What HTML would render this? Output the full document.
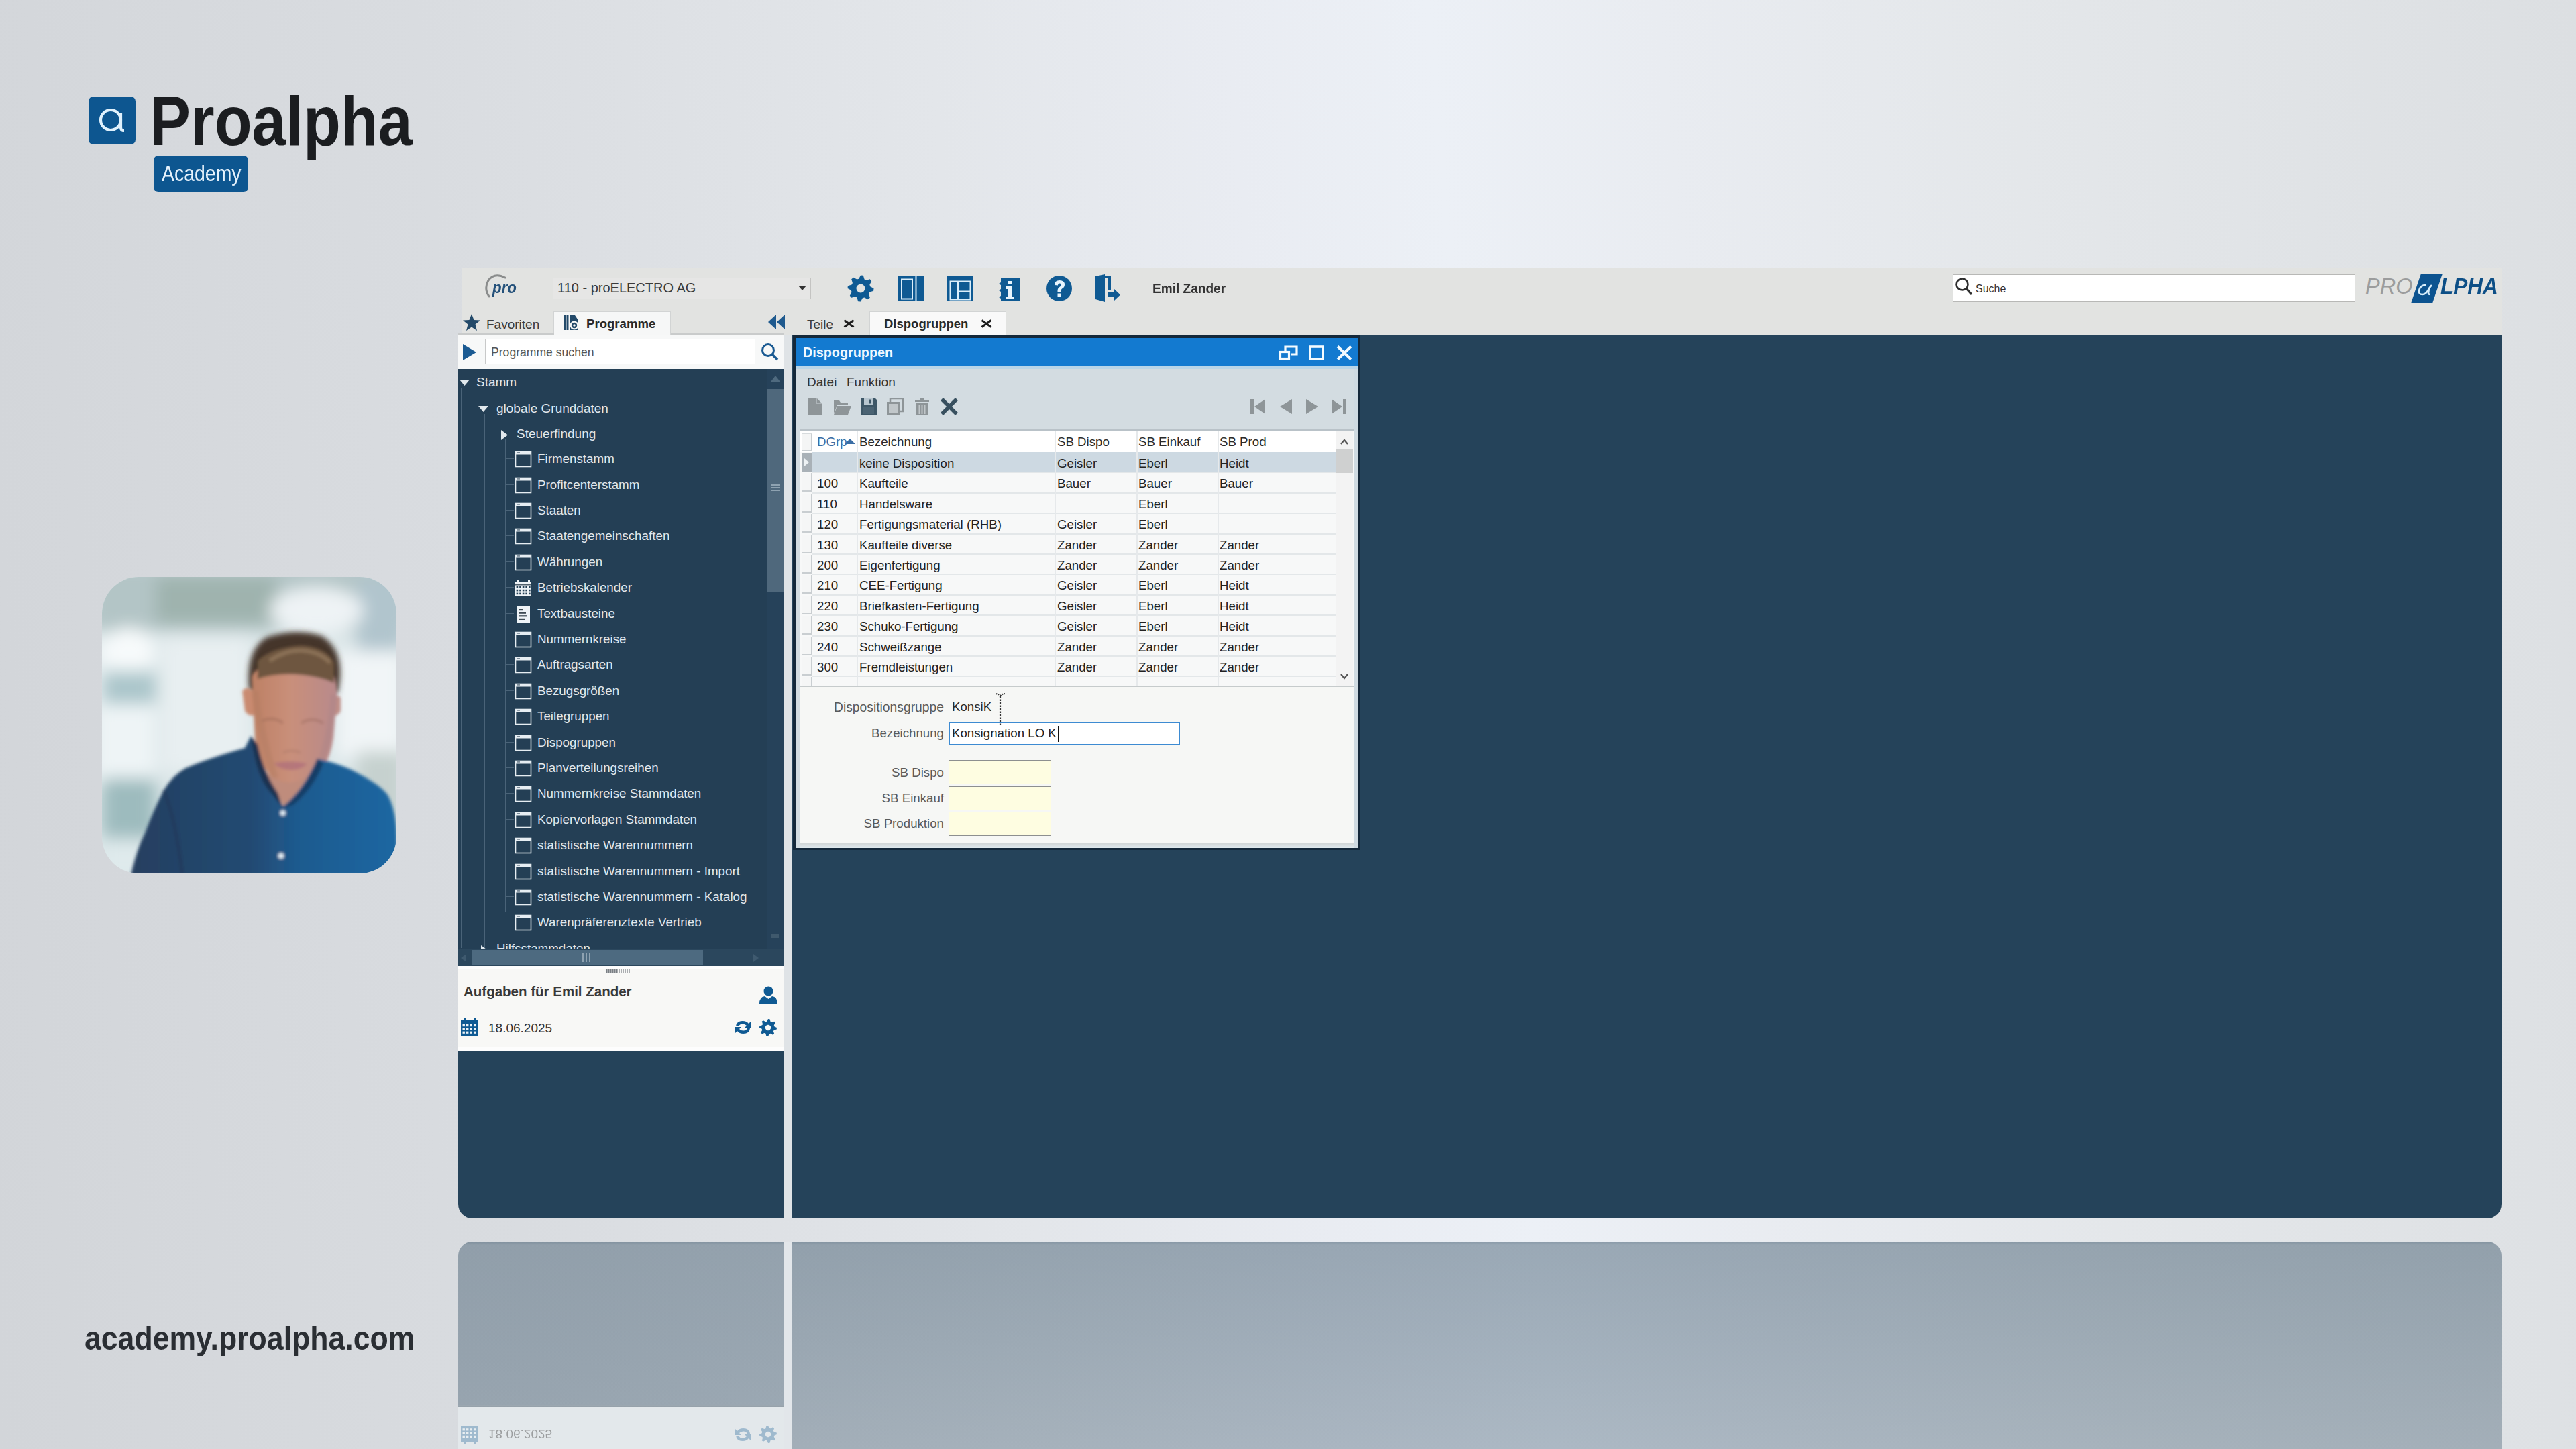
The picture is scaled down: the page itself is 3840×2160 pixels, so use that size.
<!DOCTYPE html>
<html><head><meta charset="utf-8">
<style>
*{margin:0;padding:0;box-sizing:border-box}
html,body{width:3840px;height:2160px;overflow:hidden}
body{position:relative;font-family:"Liberation Sans",sans-serif;
background:linear-gradient(85deg,#d2d5d9 0%,#d9dce0 20%,#e3e6ea 39%,#e9ecf2 50%,#ecf0f6 57.5%,#e9ecf1 66%,#e4e7ea 79%,#dcdfe2 100%);}
.a{position:absolute;display:block}
.t{position:absolute;white-space:nowrap;line-height:1}
</style></head><body>
<div class="a" style="left:132px;top:144px;width:70px;height:71px;background:#0d5690;border-radius:7px"></div>
<svg class="a" style="left:132px;top:144px;" width="70" height="71" viewBox="0 0 70 71"><circle cx="33" cy="35" r="15" fill="none" stroke="#dff1fd" stroke-width="4.2"/><path d="M48 24 L48 46 Q48 51 53 51" fill="none" stroke="#dff1fd" stroke-width="4.2"/></svg>
<div class="t" style="left:223px;top:128px;font-size:104px;color:#1b1d20;font-weight:bold;transform:scaleX(0.88);transform-origin:0 0;">Proalpha</div>
<div class="a" style="left:229px;top:232px;width:141px;height:54px;background:#0d5690;border-radius:7px"></div>
<div class="t" style="left:241px;top:243px;font-size:32.7px;color:#e6f2fc;transform:scaleX(0.87);transform-origin:0 0;">Academy</div>
<div class="t" style="left:126px;top:1970px;font-size:50px;color:#2a2e33;font-weight:bold;transform:scaleX(0.892);transform-origin:0 0;">academy.proalpha.com</div>
<svg class="a" style="left:152px;top:860px;" width="439" height="442" viewBox="0 0 439 442">
<defs>
<filter id="bl1" x="-50%" y="-50%" width="200%" height="200%"><feGaussianBlur stdDeviation="12"/></filter>
<filter id="bl2" x="-20%" y="-20%" width="140%" height="140%"><feGaussianBlur stdDeviation="2"/></filter>
<filter id="bl3" x="-20%" y="-20%" width="140%" height="140%"><feGaussianBlur stdDeviation="4"/></filter>
<linearGradient id="shirt" x1="0" y1="0" x2="1" y2="0"><stop offset="0" stop-color="#253f60"/><stop offset="0.45" stop-color="#244a72"/><stop offset="0.62" stop-color="#1e5a8e"/><stop offset="1" stop-color="#1f67a2"/></linearGradient>
<linearGradient id="face" x1="0" y1="0" x2="1" y2="0"><stop offset="0" stop-color="#bd8064"/><stop offset="0.45" stop-color="#c98f7a"/><stop offset="1" stop-color="#b88a8c"/></linearGradient>
<clipPath id="pc"><rect x="0" y="0" width="439" height="442" rx="55"/></clipPath>
</defs>
<g clip-path="url(#pc)">
<rect width="439" height="442" fill="#dbe6e8"/>
<g filter="url(#bl1)">
<rect x="-20" y="-20" width="480" height="100" fill="#b3c5c6"/>
<rect x="80" y="0" width="180" height="70" fill="#9fb3ae"/>
<rect x="380" y="0" width="70" height="120" fill="#b1c5cd"/>
<ellipse cx="320" cy="50" rx="70" ry="35" fill="#eef3f5"/>
<rect x="-10" y="90" width="90" height="220" fill="#eef4f6"/>
<ellipse cx="40" cy="110" rx="35" ry="35" fill="#f7fafb"/>
<rect x="0" y="140" width="80" height="50" fill="#abc6cb"/>
<rect x="0" y="300" width="80" height="90" fill="#9dbbbe"/>
<rect x="0" y="390" width="70" height="60" fill="#dfeaec"/>
<rect x="90" y="90" width="130" height="200" fill="#e8eff1"/>
<rect x="350" y="110" width="100" height="160" fill="#f1f5f7"/>
<rect x="380" y="260" width="70" height="130" fill="#c6d1cf"/>
</g>
<g filter="url(#bl3)">
<path d="M219 165 Q214 110 245 90 Q290 75 328 88 Q358 108 355 150 L352 172 L222 172 Z" fill="#44342a"/>
</g>
<g filter="url(#bl2)">
<path d="M209 170 Q218 160 226 172 L228 205 Q220 210 213 200 Z" fill="#c98a70"/>
<path d="M356 180 Q348 172 342 182 L342 206 Q350 210 356 200 Z" fill="#bf8f88"/>
<path d="M223 150 Q225 135 255 132 Q300 128 340 138 Q352 150 350 180 L345 240 Q338 290 305 306 Q282 312 258 304 Q235 285 228 240 Z" fill="url(#face)"/>
<path d="M232 152 Q260 142 300 146 Q330 150 346 158 L346 128 Q335 105 298 102 Q255 104 232 125 Z" fill="#6e5640"/>
<path d="M250 125 Q275 108 300 110 Q325 112 340 128" stroke="#a88c6c" stroke-width="6" fill="none" opacity="0.5"/>
<path d="M238 215 Q255 207 270 218" stroke="#8a5a4e" stroke-width="3" fill="none" opacity="0.45"/>
<path d="M297 218 Q313 208 330 218" stroke="#8a5a4e" stroke-width="3" fill="none" opacity="0.45"/>
<path d="M270 262 Q282 256 296 262" stroke="#a87566" stroke-width="3" fill="none" opacity="0.5"/><path d="M228 170 Q238 240 258 300" stroke="#b07a62" stroke-width="10" fill="none" opacity="0.35"/><path d="M346 175 Q340 250 318 295" stroke="#a98388" stroke-width="10" fill="none" opacity="0.35"/>
<path d="M256 278 Q282 272 306 279 Q296 288 281 288 Q265 287 256 278 Z" fill="#b0707a" opacity="0.8"/>
<path d="M243 302 Q262 322 272 345 L300 330 Q318 300 320 286 Q300 305 280 306 Q258 305 243 290 Z" fill="#bf8c7c"/>
<path d="M43 445 Q52 405 64 382 Q78 345 92 318 Q105 296 125 285 Q160 270 213 255 L222 237 Q232 290 255 318 L270 342 Q300 318 321 271 Q360 280 382 293 Q415 310 426 325 Q440 350 440 400 L440 445 Z" fill="url(#shirt)"/>
<path d="M222 237 Q230 300 252 322 L270 345 L262 322 Q240 290 232 250 Z" fill="#1a3050"/>
<path d="M321 271 Q305 315 270 345 L285 340 Q315 315 330 278 Z" fill="#173d66"/>
<path d="M92 318 Q110 360 120 445" stroke="#1f3656" stroke-width="5" fill="none" opacity="0.6"/>
<circle cx="269.7" cy="352" r="4" fill="#e3eef6"/>
<circle cx="267" cy="415.7" r="4.3" fill="#e8f2f8"/>
</g>
</g>
</svg>
<div class="a" style="left:688px;top:400px;width:3041px;height:99px;background:#e2e3e1;"></div>
<div class="a" style="left:683px;top:499px;width:486px;height:51px;background:#f7f8f8;"></div>
<div class="a" style="left:683px;top:550px;width:486px;height:890px;background:#243f55;"></div>
<div class="a" style="left:683px;top:1440px;width:486px;height:126px;background:#f8f8f6;border-top:5px solid #fdfdfd;border-bottom:5px solid #fdfdfd"></div>
<div class="a" style="left:683px;top:1566px;width:486px;height:250px;background:#25435a;border-bottom-left-radius:21px"></div>
<div class="a" style="left:1169px;top:499px;width:12px;height:1317px;background:#dfe3e6;"></div>
<div class="a" style="left:1181px;top:499px;width:2548px;height:1317px;background:#25435a;border-bottom-right-radius:21px"></div>
<svg class="a" style="left:720px;top:405px;" width="56" height="40" viewBox="0 0 56 40"><path d="M33 9 Q17 1 8 13 Q1 25 9 37" fill="none" stroke="#8a8c8c" stroke-width="3" stroke-linecap="round"/></svg>
<div class="t" style="left:734px;top:418px;font-size:23px;color:#24517a;font-weight:bold;font-style:italic;transform:scaleX(0.97);transform-origin:0 0;">pro</div>
<div class="a" style="left:824px;top:414px;width:385px;height:32px;background:#e6e6e5;border:1.5px solid #c4c4c2"></div>
<div class="t" style="left:831px;top:419px;font-size:20px;color:#3a3a3a;">110 - proELECTRO AG</div>
<svg class="a" style="left:1190px;top:426px;" width="12" height="8" viewBox="0 0 12 8"><path d="M0 0 L12 0 L6 7 Z" fill="#333"/></svg>
<svg class="a" style="left:1262px;top:409px;" width="42" height="42" viewBox="0 0 42 42"><path d="M18.17,6.78 L21.00,1.50 L24.80,1.87 L26.55,7.60 L29.06,8.94 L34.79,7.21 L37.21,10.17 L34.40,15.45 L35.22,18.17 L40.50,21.00 L40.13,24.80 L34.40,26.55 L33.06,29.06 L34.79,34.79 L31.83,37.21 L26.55,34.40 L23.83,35.22 L21.00,40.50 L17.20,40.13 L15.45,34.40 L12.94,33.06 L7.21,34.79 L4.79,31.83 L7.60,26.55 L6.78,23.83 L1.50,21.00 L1.87,17.20 L7.60,15.45 L8.94,12.94 L7.21,7.21 L10.17,4.79 L15.45,7.60 Z M27.5,21 A6.5 6.5 0 1 0 14.5,21 A6.5 6.5 0 1 0 27.5,21 Z" fill="#0f5a93" fill-rule="evenodd"/></svg>
<svg class="a" style="left:1338px;top:411px;" width="39" height="38" viewBox="0 0 39 38"><rect x="0" y="0" width="39" height="38" fill="#0f5a93"/><rect x="6" y="5.5" width="16" height="29" fill="none" stroke="#dbeefa" stroke-width="2"/><rect x="26.5" y="0" width="2" height="38" fill="#dbeefa"/></svg>
<svg class="a" style="left:1412px;top:411px;" width="39" height="38" viewBox="0 0 39 38"><rect x="0" y="0" width="39" height="38" fill="#0f5a93"/><rect x="4.5" y="8.5" width="30" height="27" fill="none" stroke="#dbeefa" stroke-width="2"/><rect x="15" y="8" width="2" height="28" fill="#dbeefa"/><rect x="16" y="22.5" width="19" height="2" fill="#dbeefa"/></svg>
<svg class="a" style="left:1489px;top:414px;" width="32" height="35" viewBox="0 0 32 35"><path d="M3 0 H32 V35 H3 V31 L0 29 L3 27 V21 L0 19 L3 17 V11 L0 9 L3 7 Z" fill="#0f5a93"/><rect x="14" y="5" width="6" height="5" fill="#e8f4fc"/><path d="M11 13 H20 V28 H23 V32 H11 V28 H14 V17 H11 Z" fill="#e8f4fc"/></svg>
<svg class="a" style="left:1559px;top:410px;" width="40" height="40" viewBox="0 0 40 40"><circle cx="20" cy="20" r="19" fill="#0f5a93"/><path d="M13 15 Q13 8 20.5 8 Q28 8 28 14.5 Q28 18.5 24 20.5 Q22.5 21.5 22.5 24 V25.5 H17.5 V23.5 Q17.5 19.5 21 17.5 Q23 16.3 23 14.8 Q23 12.5 20.5 12.5 Q18 12.5 18 15.5 Z" fill="#e8f4fc"/><rect x="17.5" y="27.5" width="5" height="5" fill="#e8f4fc"/></svg>
<svg class="a" style="left:1632px;top:409px;" width="40" height="41" viewBox="0 0 40 41"><path d="M1 3 L15 0 V41 L1 37 Z" fill="#0f5a93"/><path d="M15 2 H24 V23 H19 V6 H15 Z" fill="#0f5a93"/><path d="M19 27 H29 V22 L38 30.5 L29 39 V34 H19 Z" fill="#0f5a93"/></svg>
<div class="t" style="left:1718px;top:420px;font-size:20.5px;color:#333333;font-weight:bold;transform:scaleX(0.93);transform-origin:0 0;">Emil Zander</div>
<div class="a" style="left:2911px;top:409px;width:600px;height:41px;background:#ffffff;border:1.5px solid #b8b8b6"></div>
<svg class="a" style="left:2914px;top:413px;" width="28" height="30" viewBox="0 0 28 30"><circle cx="11" cy="11" r="8.5" fill="none" stroke="#2d2d2d" stroke-width="2.6"/><path d="M17 17 L25 26" stroke="#2d2d2d" stroke-width="3.2"/></svg>
<div class="t" style="left:2945px;top:423px;font-size:16px;color:#333;">Suche</div>
<div class="t" style="left:3526px;top:411px;font-size:32.5px;color:#9b9c9c;font-style:italic;">PRO</div>
<svg class="a" style="left:3594px;top:408px;" width="48" height="44" viewBox="0 0 48 44"><path d="M15 0 H47 L32 44 H0 Z" fill="#0c5390"/><path d="M22 17 Q14 17 12 25 Q11 31 17 31 Q23 31 27 22 L31 17 M27 22 L26 29 Q26 31 29 31" fill="none" stroke="#d8eefc" stroke-width="2.6"/></svg>
<div class="t" style="left:3638px;top:411px;font-size:32.5px;color:#0d4f86;font-weight:bold;font-style:italic;transform:scaleX(0.97);transform-origin:0 0;">LPHA</div>
<svg class="a" style="left:690px;top:468px;" width="26" height="26" viewBox="0 0 26 26"><path d="M13 0 L16.5 9 L26 9.5 L18.5 15.5 L21 25 L13 19.5 L5 25 L7.5 15.5 L0 9.5 L9.5 9 Z" fill="#234a6a"/></svg>
<div class="t" style="left:725px;top:474px;font-size:19px;color:#3c3c3c;">Favoriten</div>
<div class="a" style="left:825px;top:464px;width:175px;height:36px;background:#f6f7f7;border:1px solid #d2d4d4;border-bottom:none"></div>
<svg class="a" style="left:839px;top:468px;" width="26" height="26" viewBox="0 0 26 26"><rect x="1" y="2" width="3" height="22" fill="#234a6a"/><rect x="5.5" y="2" width="3" height="22" fill="#234a6a"/><path d="M10 2 H18 L22 8 V24 H10 Z" fill="#234a6a"/><circle cx="17" cy="17" r="6.5" fill="#f6f7f7"/><circle cx="17" cy="17" r="4.2" fill="#234a6a"/><circle cx="17" cy="17" r="1.8" fill="#f6f7f7"/></svg>
<div class="t" style="left:874px;top:474px;font-size:18.6px;color:#2a2a2a;font-weight:bold;">Programme</div>
<svg class="a" style="left:1145px;top:469px;" width="26" height="22" viewBox="0 0 26 22"><path d="M12 0 L0 11 L12 22 Z M25 0 L13 11 L25 22 Z" fill="#1f5a8e"/></svg>
<div class="t" style="left:1203px;top:474px;font-size:19px;color:#3c3c3c;">Teile</div>
<svg class="a" style="left:1257px;top:476px;" width="17" height="13" viewBox="0 0 17 13"><path d="M1.5 1.5 L15.5 11.5 M15.5 1.5 L1.5 11.5" stroke="#1d1d1d" stroke-width="3"/></svg>
<div class="a" style="left:1296px;top:464px;width:204px;height:36px;background:#f9f9f9;border:1px solid #d2d4d4;border-bottom:none"></div>
<div class="t" style="left:1318px;top:474px;font-size:18.5px;color:#2a2a2a;font-weight:bold;">Dispogruppen</div>
<svg class="a" style="left:1462px;top:476px;" width="17" height="13" viewBox="0 0 17 13"><path d="M1.5 1.5 L15.5 11.5 M15.5 1.5 L1.5 11.5" stroke="#1d1d1d" stroke-width="3"/></svg>
<div class="a" style="left:683px;top:497px;width:143px;height:2px;background:#c9cbcb;"></div>
<div class="a" style="left:1000px;top:497px;width:169px;height:2px;background:#c9cbcb;"></div>
<svg class="a" style="left:689px;top:513px;" width="22" height="24" viewBox="0 0 22 24"><path d="M1 0 L21 12 L1 24 Z" fill="#1a5a92"/></svg>
<div class="a" style="left:723px;top:505px;width:403px;height:38px;background:#ffffff;border:1.5px solid #c8c9c9"></div>
<div class="t" style="left:732px;top:517px;font-size:17.6px;color:#555;">Programme suchen</div>
<svg class="a" style="left:1134px;top:511px;" width="28" height="28" viewBox="0 0 28 28"><circle cx="11" cy="11" r="8.5" fill="none" stroke="#1a5a92" stroke-width="3"/><path d="M17 17 L25 25" stroke="#1a5a92" stroke-width="3.5"/></svg>
<div class="a" style="left:687px;top:578px;width:1px;height:835px;background:#4a6378;"></div>
<div class="a" style="left:722px;top:617px;width:1px;height:796px;background:#4a6378;"></div>
<div class="a" style="left:753px;top:655px;width:1px;height:705px;background:#4a6378;"></div>
<div class="a" style="left:754px;top:683px;width:12px;height:1px;background:#4a6378;"></div>
<div class="a" style="left:754px;top:722px;width:12px;height:1px;background:#4a6378;"></div>
<div class="a" style="left:754px;top:760px;width:12px;height:1px;background:#4a6378;"></div>
<div class="a" style="left:754px;top:798px;width:12px;height:1px;background:#4a6378;"></div>
<div class="a" style="left:754px;top:837px;width:12px;height:1px;background:#4a6378;"></div>
<div class="a" style="left:754px;top:875px;width:12px;height:1px;background:#4a6378;"></div>
<div class="a" style="left:754px;top:914px;width:12px;height:1px;background:#4a6378;"></div>
<div class="a" style="left:754px;top:952px;width:12px;height:1px;background:#4a6378;"></div>
<div class="a" style="left:754px;top:990px;width:12px;height:1px;background:#4a6378;"></div>
<div class="a" style="left:754px;top:1029px;width:12px;height:1px;background:#4a6378;"></div>
<div class="a" style="left:754px;top:1067px;width:12px;height:1px;background:#4a6378;"></div>
<div class="a" style="left:754px;top:1106px;width:12px;height:1px;background:#4a6378;"></div>
<div class="a" style="left:754px;top:1144px;width:12px;height:1px;background:#4a6378;"></div>
<div class="a" style="left:754px;top:1182px;width:12px;height:1px;background:#4a6378;"></div>
<div class="a" style="left:754px;top:1221px;width:12px;height:1px;background:#4a6378;"></div>
<div class="a" style="left:754px;top:1259px;width:12px;height:1px;background:#4a6378;"></div>
<div class="a" style="left:754px;top:1298px;width:12px;height:1px;background:#4a6378;"></div>
<div class="a" style="left:754px;top:1336px;width:12px;height:1px;background:#4a6378;"></div>
<div class="a" style="left:754px;top:1374px;width:12px;height:1px;background:#4a6378;"></div>
<svg class="a" style="left:685px;top:566px;" width="16" height="10" viewBox="0 0 16 10"><path d="M0 0 H15 L7.5 9 Z" fill="#e1e8ed"/></svg>
<div class="t" style="left:710px;top:560px;font-size:19px;color:#e1e8ed;">Stamm</div>
<svg class="a" style="left:713px;top:605px;" width="16" height="10" viewBox="0 0 16 10"><path d="M0 0 H15 L7.5 9 Z" fill="#e1e8ed"/></svg>
<div class="t" style="left:740px;top:599px;font-size:19px;color:#e1e8ed;">globale Grunddaten</div>
<svg class="a" style="left:747px;top:641px;" width="11" height="16" viewBox="0 0 11 16"><path d="M0 0 L10 7.5 L0 15 Z" fill="#e1e8ed"/></svg>
<div class="t" style="left:770px;top:637px;font-size:19px;color:#e1e8ed;">Steuerfindung</div>
<svg class="a" style="left:767px;top:672px;" width="26" height="26" viewBox="0 0 26 26"><rect x="1.5" y="1.5" width="23" height="22" fill="none" stroke="#e6edf2" stroke-width="1.6"/><rect x="1" y="1" width="24" height="4.5" fill="#e6edf2"/><rect x="3" y="2" width="5" height="1.8" fill="#7d8d9a"/></svg>
<div class="t" style="left:801px;top:675px;font-size:18.8px;color:#e1e8ed;">Firmenstamm</div>
<svg class="a" style="left:767px;top:711px;" width="26" height="26" viewBox="0 0 26 26"><rect x="1.5" y="1.5" width="23" height="22" fill="none" stroke="#e6edf2" stroke-width="1.6"/><rect x="1" y="1" width="24" height="4.5" fill="#e6edf2"/><rect x="3" y="2" width="5" height="1.8" fill="#7d8d9a"/></svg>
<div class="t" style="left:801px;top:714px;font-size:18.8px;color:#e1e8ed;">Profitcenterstamm</div>
<svg class="a" style="left:767px;top:749px;" width="26" height="26" viewBox="0 0 26 26"><rect x="1.5" y="1.5" width="23" height="22" fill="none" stroke="#e6edf2" stroke-width="1.6"/><rect x="1" y="1" width="24" height="4.5" fill="#e6edf2"/><rect x="3" y="2" width="5" height="1.8" fill="#7d8d9a"/></svg>
<div class="t" style="left:801px;top:752px;font-size:18.8px;color:#e1e8ed;">Staaten</div>
<svg class="a" style="left:767px;top:787px;" width="26" height="26" viewBox="0 0 26 26"><rect x="1.5" y="1.5" width="23" height="22" fill="none" stroke="#e6edf2" stroke-width="1.6"/><rect x="1" y="1" width="24" height="4.5" fill="#e6edf2"/><rect x="3" y="2" width="5" height="1.8" fill="#7d8d9a"/></svg>
<div class="t" style="left:801px;top:790px;font-size:18.8px;color:#e1e8ed;">Staatengemeinschaften</div>
<svg class="a" style="left:767px;top:826px;" width="26" height="26" viewBox="0 0 26 26"><rect x="1.5" y="1.5" width="23" height="22" fill="none" stroke="#e6edf2" stroke-width="1.6"/><rect x="1" y="1" width="24" height="4.5" fill="#e6edf2"/><rect x="3" y="2" width="5" height="1.8" fill="#7d8d9a"/></svg>
<div class="t" style="left:801px;top:829px;font-size:18.8px;color:#e1e8ed;">Währungen</div>
<svg class="a" style="left:767px;top:864px;" width="26" height="26" viewBox="0 0 26 26"><rect x="1" y="4" width="24" height="21" fill="#eef3f7"/><rect x="3" y="0" width="3" height="5" fill="#eef3f7"/><rect x="20" y="0" width="3" height="5" fill="#eef3f7"/><rect x="1" y="7" width="24" height="1.5" fill="#51606c"/><rect x="2.6" y="10.0" width="2.6" height="2.6" fill="#243f55"/><rect x="7.199999999999999" y="10.0" width="2.6" height="2.6" fill="#243f55"/><rect x="11.799999999999999" y="10.0" width="2.6" height="2.6" fill="#243f55"/><rect x="16.4" y="10.0" width="2.6" height="2.6" fill="#243f55"/><rect x="21.0" y="10.0" width="2.6" height="2.6" fill="#243f55"/><rect x="2.6" y="14.8" width="2.6" height="2.6" fill="#243f55"/><rect x="7.199999999999999" y="14.8" width="2.6" height="2.6" fill="#243f55"/><rect x="11.799999999999999" y="14.8" width="2.6" height="2.6" fill="#243f55"/><rect x="16.4" y="14.8" width="2.6" height="2.6" fill="#243f55"/><rect x="21.0" y="14.8" width="2.6" height="2.6" fill="#243f55"/><rect x="2.6" y="19.6" width="2.6" height="2.6" fill="#243f55"/><rect x="7.199999999999999" y="19.6" width="2.6" height="2.6" fill="#243f55"/><rect x="11.799999999999999" y="19.6" width="2.6" height="2.6" fill="#243f55"/><rect x="16.4" y="19.6" width="2.6" height="2.6" fill="#243f55"/><rect x="21.0" y="19.6" width="2.6" height="2.6" fill="#243f55"/></svg>
<div class="t" style="left:801px;top:867px;font-size:18.8px;color:#e1e8ed;">Betriebskalender</div>
<svg class="a" style="left:767px;top:903px;" width="26" height="26" viewBox="0 0 26 26"><rect x="3" y="1" width="20" height="24" fill="#eef3f7"/><rect x="6" y="5.0" width="6" height="2.2" fill="#3e4a54"/><rect x="6" y="9.6" width="11" height="2.2" fill="#3e4a54"/><rect x="6" y="14.2" width="13" height="2.2" fill="#3e4a54"/><rect x="6" y="18.799999999999997" width="9" height="2.2" fill="#3e4a54"/></svg>
<div class="t" style="left:801px;top:906px;font-size:18.8px;color:#e1e8ed;">Textbausteine</div>
<svg class="a" style="left:767px;top:941px;" width="26" height="26" viewBox="0 0 26 26"><rect x="1.5" y="1.5" width="23" height="22" fill="none" stroke="#e6edf2" stroke-width="1.6"/><rect x="1" y="1" width="24" height="4.5" fill="#e6edf2"/><rect x="3" y="2" width="5" height="1.8" fill="#7d8d9a"/></svg>
<div class="t" style="left:801px;top:944px;font-size:18.8px;color:#e1e8ed;">Nummernkreise</div>
<svg class="a" style="left:767px;top:979px;" width="26" height="26" viewBox="0 0 26 26"><rect x="1.5" y="1.5" width="23" height="22" fill="none" stroke="#e6edf2" stroke-width="1.6"/><rect x="1" y="1" width="24" height="4.5" fill="#e6edf2"/><rect x="3" y="2" width="5" height="1.8" fill="#7d8d9a"/></svg>
<div class="t" style="left:801px;top:982px;font-size:18.8px;color:#e1e8ed;">Auftragsarten</div>
<svg class="a" style="left:767px;top:1018px;" width="26" height="26" viewBox="0 0 26 26"><rect x="1.5" y="1.5" width="23" height="22" fill="none" stroke="#e6edf2" stroke-width="1.6"/><rect x="1" y="1" width="24" height="4.5" fill="#e6edf2"/><rect x="3" y="2" width="5" height="1.8" fill="#7d8d9a"/></svg>
<div class="t" style="left:801px;top:1021px;font-size:18.8px;color:#e1e8ed;">Bezugsgrößen</div>
<svg class="a" style="left:767px;top:1056px;" width="26" height="26" viewBox="0 0 26 26"><rect x="1.5" y="1.5" width="23" height="22" fill="none" stroke="#e6edf2" stroke-width="1.6"/><rect x="1" y="1" width="24" height="4.5" fill="#e6edf2"/><rect x="3" y="2" width="5" height="1.8" fill="#7d8d9a"/></svg>
<div class="t" style="left:801px;top:1059px;font-size:18.8px;color:#e1e8ed;">Teilegruppen</div>
<svg class="a" style="left:767px;top:1095px;" width="26" height="26" viewBox="0 0 26 26"><rect x="1.5" y="1.5" width="23" height="22" fill="none" stroke="#e6edf2" stroke-width="1.6"/><rect x="1" y="1" width="24" height="4.5" fill="#e6edf2"/><rect x="3" y="2" width="5" height="1.8" fill="#7d8d9a"/></svg>
<div class="t" style="left:801px;top:1098px;font-size:18.8px;color:#e1e8ed;">Dispogruppen</div>
<svg class="a" style="left:767px;top:1133px;" width="26" height="26" viewBox="0 0 26 26"><rect x="1.5" y="1.5" width="23" height="22" fill="none" stroke="#e6edf2" stroke-width="1.6"/><rect x="1" y="1" width="24" height="4.5" fill="#e6edf2"/><rect x="3" y="2" width="5" height="1.8" fill="#7d8d9a"/></svg>
<div class="t" style="left:801px;top:1136px;font-size:18.8px;color:#e1e8ed;">Planverteilungsreihen</div>
<svg class="a" style="left:767px;top:1171px;" width="26" height="26" viewBox="0 0 26 26"><rect x="1.5" y="1.5" width="23" height="22" fill="none" stroke="#e6edf2" stroke-width="1.6"/><rect x="1" y="1" width="24" height="4.5" fill="#e6edf2"/><rect x="3" y="2" width="5" height="1.8" fill="#7d8d9a"/></svg>
<div class="t" style="left:801px;top:1174px;font-size:18.8px;color:#e1e8ed;">Nummernkreise Stammdaten</div>
<svg class="a" style="left:767px;top:1210px;" width="26" height="26" viewBox="0 0 26 26"><rect x="1.5" y="1.5" width="23" height="22" fill="none" stroke="#e6edf2" stroke-width="1.6"/><rect x="1" y="1" width="24" height="4.5" fill="#e6edf2"/><rect x="3" y="2" width="5" height="1.8" fill="#7d8d9a"/></svg>
<div class="t" style="left:801px;top:1213px;font-size:18.8px;color:#e1e8ed;">Kopiervorlagen Stammdaten</div>
<svg class="a" style="left:767px;top:1248px;" width="26" height="26" viewBox="0 0 26 26"><rect x="1.5" y="1.5" width="23" height="22" fill="none" stroke="#e6edf2" stroke-width="1.6"/><rect x="1" y="1" width="24" height="4.5" fill="#e6edf2"/><rect x="3" y="2" width="5" height="1.8" fill="#7d8d9a"/></svg>
<div class="t" style="left:801px;top:1251px;font-size:18.8px;color:#e1e8ed;">statistische Warennummern</div>
<svg class="a" style="left:767px;top:1287px;" width="26" height="26" viewBox="0 0 26 26"><rect x="1.5" y="1.5" width="23" height="22" fill="none" stroke="#e6edf2" stroke-width="1.6"/><rect x="1" y="1" width="24" height="4.5" fill="#e6edf2"/><rect x="3" y="2" width="5" height="1.8" fill="#7d8d9a"/></svg>
<div class="t" style="left:801px;top:1290px;font-size:18.8px;color:#e1e8ed;">statistische Warennummern - Import</div>
<svg class="a" style="left:767px;top:1325px;" width="26" height="26" viewBox="0 0 26 26"><rect x="1.5" y="1.5" width="23" height="22" fill="none" stroke="#e6edf2" stroke-width="1.6"/><rect x="1" y="1" width="24" height="4.5" fill="#e6edf2"/><rect x="3" y="2" width="5" height="1.8" fill="#7d8d9a"/></svg>
<div class="t" style="left:801px;top:1328px;font-size:18.8px;color:#e1e8ed;">statistische Warennummern - Katalog</div>
<svg class="a" style="left:767px;top:1363px;" width="26" height="26" viewBox="0 0 26 26"><rect x="1.5" y="1.5" width="23" height="22" fill="none" stroke="#e6edf2" stroke-width="1.6"/><rect x="1" y="1" width="24" height="4.5" fill="#e6edf2"/><rect x="3" y="2" width="5" height="1.8" fill="#7d8d9a"/></svg>
<div class="t" style="left:801px;top:1366px;font-size:18.8px;color:#e1e8ed;">Warenpräferenztexte Vertrieb</div>
<div class="a" style="left:683px;top:1395px;width:460px;height:20px;overflow:hidden">
<svg class="a" style="left:34px;top:14px" width="11" height="16"><path d="M0 0 L10 7.5 L0 15 Z" fill="#e1e8ed"/></svg>
<div class="t" style="left:57px;top:10px;font-size:18.8px;color:#e1e8ed">Hilfsstammdaten</div>
</div>
<div class="a" style="left:1143px;top:550px;width:26px;height:865px;background:#26425a;"></div>
<svg class="a" style="left:1148px;top:558px;" width="16" height="12" viewBox="0 0 16 12"><path d="M1 11 L8 2 L15 11 Z" fill="#4f6a7f"/></svg>
<div class="a" style="left:1144px;top:580px;width:24px;height:302px;background:#4f687c;"></div>
<svg class="a" style="left:1150px;top:722px;" width="12" height="12" viewBox="0 0 12 12"><rect x="0" y="0" width="12" height="2" fill="#8ea2b1"/><rect x="0" y="4" width="12" height="2" fill="#8ea2b1"/><rect x="0" y="8" width="12" height="2" fill="#8ea2b1"/></svg>
<div class="a" style="left:1150px;top:1392px;width:11px;height:6px;background:#3f596d;"></div>
<div class="a" style="left:683px;top:1415px;width:486px;height:25px;background:#2b475d;"></div>
<div class="a" style="left:704px;top:1416px;width:344px;height:23px;background:#4d6a80;"></div>
<svg class="a" style="left:868px;top:1420px;" width="14" height="14" viewBox="0 0 14 14"><rect x="0" y="0" width="2" height="14" fill="#8ea2b1"/><rect x="5" y="0" width="2" height="14" fill="#8ea2b1"/><rect x="10" y="0" width="2" height="14" fill="#8ea2b1"/></svg>
<svg class="a" style="left:686px;top:1421px;" width="10" height="14" viewBox="0 0 10 14"><path d="M9 1 L1 7 L9 13 Z" fill="#3f5a6f"/></svg>
<svg class="a" style="left:1122px;top:1421px;" width="10" height="14" viewBox="0 0 10 14"><path d="M1 1 L9 7 L1 13 Z" fill="#3f5a6f"/></svg>
<svg class="a" style="left:904px;top:1444px;" width="36" height="7" viewBox="0 0 36 7"><rect x="0" y="0" width="1.6" height="6" fill="#7a7f84"/><rect x="3" y="0" width="1.6" height="6" fill="#7a7f84"/><rect x="6" y="0" width="1.6" height="6" fill="#7a7f84"/><rect x="9" y="0" width="1.6" height="6" fill="#7a7f84"/><rect x="12" y="0" width="1.6" height="6" fill="#7a7f84"/><rect x="15" y="0" width="1.6" height="6" fill="#7a7f84"/><rect x="18" y="0" width="1.6" height="6" fill="#7a7f84"/><rect x="21" y="0" width="1.6" height="6" fill="#7a7f84"/><rect x="24" y="0" width="1.6" height="6" fill="#7a7f84"/><rect x="27" y="0" width="1.6" height="6" fill="#7a7f84"/><rect x="30" y="0" width="1.6" height="6" fill="#7a7f84"/><rect x="33" y="0" width="1.6" height="6" fill="#7a7f84"/></svg>
<div class="t" style="left:691px;top:1468px;font-size:20.5px;color:#383838;font-weight:bold;">Aufgaben für Emil Zander</div>
<svg class="a" style="left:1132px;top:1470px;" width="27" height="26" viewBox="0 0 27 26"><circle cx="13.5" cy="7.5" r="7" fill="#0f5a93"/><path d="M0 26 Q0 16 8 15 L13.5 19 L19 15 Q27 16 27 26 Z" fill="#0f5a93"/></svg>
<svg class="a" style="left:687px;top:1518px;" width="27" height="27" viewBox="0 0 27 27"><rect x="0" y="3" width="26" height="23" fill="#0f5a93"/><rect x="4" y="0" width="3" height="5" fill="#0f5a93"/><rect x="19" y="0" width="3" height="5" fill="#0f5a93"/><rect x="2.5" y="9.0" width="3.4" height="3.2" fill="#eef4f8"/><rect x="8.0" y="9.0" width="3.4" height="3.2" fill="#eef4f8"/><rect x="13.5" y="9.0" width="3.4" height="3.2" fill="#eef4f8"/><rect x="19.0" y="9.0" width="3.4" height="3.2" fill="#eef4f8"/><rect x="2.5" y="14.3" width="3.4" height="3.2" fill="#eef4f8"/><rect x="8.0" y="14.3" width="3.4" height="3.2" fill="#eef4f8"/><rect x="13.5" y="14.3" width="3.4" height="3.2" fill="#eef4f8"/><rect x="19.0" y="14.3" width="3.4" height="3.2" fill="#eef4f8"/><rect x="2.5" y="19.6" width="3.4" height="3.2" fill="#eef4f8"/><rect x="8.0" y="19.6" width="3.4" height="3.2" fill="#eef4f8"/><rect x="13.5" y="19.6" width="3.4" height="3.2" fill="#eef4f8"/><rect x="19.0" y="19.6" width="3.4" height="3.2" fill="#eef4f8"/></svg>
<div class="t" style="left:728px;top:1523px;font-size:19px;color:#333;">18.06.2025</div>
<svg class="a" style="left:1094px;top:1518px;" width="27" height="27" viewBox="0 0 27 27"><path d="M3 12 Q4 4 13 4 Q19 4 22 8 L25 5 V14 H16 L19 11 Q17 8.5 13 8.5 Q8 8.5 7.5 12 Z" fill="#0f5a93"/><path d="M24 15 Q23 23 14 23 Q8 23 5 19 L2 22 V13 H11 L8 16 Q10 18.5 14 18.5 Q19 18.5 19.5 15 Z" fill="#0f5a93"/></svg>
<svg class="a" style="left:1131px;top:1518px;" width="28" height="28" viewBox="0 0 28 28"><path d="M12.15,4.68 L14.00,1.00 L16.54,1.25 L17.64,5.22 L19.28,6.10 L23.19,4.81 L24.81,6.78 L22.78,10.36 L23.32,12.15 L27.00,14.00 L26.75,16.54 L22.78,17.64 L21.90,19.28 L23.19,23.19 L21.22,24.81 L17.64,22.78 L15.85,23.32 L14.00,27.00 L11.46,26.75 L10.36,22.78 L8.72,21.90 L4.81,23.19 L3.19,21.22 L5.22,17.64 L4.68,15.85 L1.00,14.00 L1.25,11.46 L5.22,10.36 L6.10,8.72 L4.81,4.81 L6.78,3.19 L10.36,5.22 Z M18.2,14 A4.2 4.2 0 1 0 9.8,14 A4.2 4.2 0 1 0 18.2,14 Z" fill="#0f5a93" fill-rule="evenodd"/></svg>
<div class="a" style="left:1182px;top:500px;width:845px;height:767px;background:#14283a;"></div>
<div class="a" style="left:1187px;top:504px;width:837px;height:42px;background:#137ad0;"></div>
<div class="a" style="left:1187px;top:546px;width:837px;height:4px;background:#b9d5e8;"></div>
<div class="a" style="left:1187px;top:550px;width:837px;height:714px;background:#d3dce1;"></div>
<div class="t" style="left:1197px;top:516px;font-size:19.8px;color:#f0f8ff;font-weight:bold;">Dispogruppen</div>
<svg class="a" style="left:1907px;top:515px;" width="29" height="22" viewBox="0 0 29 22"><rect x="1.5" y="9.5" width="13" height="10" fill="none" stroke="#f4fbff" stroke-width="3.2"/><path d="M9 8 V2 H26 V13 H17" fill="none" stroke="#f4fbff" stroke-width="3.2"/></svg>
<svg class="a" style="left:1951px;top:515px;" width="23" height="22" viewBox="0 0 23 22"><rect x="2" y="2" width="19" height="18" fill="none" stroke="#f4fbff" stroke-width="3.6"/></svg>
<svg class="a" style="left:1992px;top:515px;" width="24" height="22" viewBox="0 0 24 22"><path d="M2 1.5 L22 20.5 M22 1.5 L2 20.5" stroke="#f4fbff" stroke-width="4"/></svg>
<div class="t" style="left:1203px;top:560px;font-size:19px;color:#333;">Datei</div>
<div class="t" style="left:1262px;top:560px;font-size:19px;color:#333;">Funktion</div>
<svg class="a" style="left:1203px;top:592px;" width="23" height="27" viewBox="0 0 23 27"><path d="M1 1 H14 L22 9 V26 H1 Z" fill="#8e9598"/><path d="M14 1 V9 H22" fill="none" stroke="#b9c0c3" stroke-width="1.5"/></svg>
<svg class="a" style="left:1242px;top:594px;" width="28" height="25" viewBox="0 0 28 25"><path d="M1 3 H9 L11 6 H22 V10 H6 L1 22 Z" fill="#8e9598"/><path d="M6 11 H27 L22 24 H1 Z" fill="#8e9598"/></svg>
<svg class="a" style="left:1282px;top:592px;" width="26" height="27" viewBox="0 0 26 27"><path d="M1 1 H22 L25 4 V26 H1 Z" fill="#3e5767"/><rect x="6" y="2" width="13" height="9" fill="#b8c6cf"/><rect x="13" y="3.5" width="3" height="6" fill="#3e5767"/><rect x="5" y="15" width="16" height="10" fill="#4b6373"/></svg>
<svg class="a" style="left:1321px;top:593px;" width="26" height="26" viewBox="0 0 26 26"><rect x="6" y="1" width="19" height="19" fill="none" stroke="#8e9598" stroke-width="2.5"/><rect x="1" y="6" width="19" height="19" fill="#8e9598"/><rect x="4" y="9" width="13" height="13" fill="#c1c7ca"/></svg>
<svg class="a" style="left:1364px;top:593px;" width="21" height="26" viewBox="0 0 21 26"><rect x="0" y="3" width="21" height="3" fill="#8e9598"/><rect x="7" y="0" width="7" height="3" fill="#8e9598"/><path d="M2 8 H19 V26 H2 Z" fill="#8e9598"/><rect x="5.5" y="10" width="2" height="14" fill="#c1c7ca"/><rect x="9.5" y="10" width="2" height="14" fill="#c1c7ca"/><rect x="13.5" y="10" width="2" height="14" fill="#c1c7ca"/></svg>
<svg class="a" style="left:1401px;top:593px;" width="28" height="26" viewBox="0 0 28 26"><path d="M3 2 L25 24 M25 2 L3 24" stroke="#38505f" stroke-width="5.5"/></svg>
<svg class="a" style="left:1864px;top:594px;" width="23" height="24" viewBox="0 0 23 24"><rect x="0" y="1" width="5" height="22" fill="#8e9598"/><path d="M22 1 V23 L6 12 Z" fill="#8e9598"/></svg>
<svg class="a" style="left:1906px;top:594px;" width="21" height="24" viewBox="0 0 21 24"><path d="M20 1 V23 L2 12 Z" fill="#8e9598"/></svg>
<svg class="a" style="left:1946px;top:594px;" width="21" height="24" viewBox="0 0 21 24"><path d="M1 1 V23 L19 12 Z" fill="#8e9598"/></svg>
<svg class="a" style="left:1984px;top:594px;" width="23" height="24" viewBox="0 0 23 24"><rect x="18" y="1" width="5" height="22" fill="#8e9598"/><path d="M1 1 V23 L17 12 Z" fill="#8e9598"/></svg>
<div class="a" style="left:1193px;top:640px;width:825px;height:2px;background:#b9c2c8;"></div>
<div class="a" style="left:1193px;top:642px;width:825px;height:381px;background:#f7f8f8;"></div>
<div class="a" style="left:1193px;top:1022px;width:825px;height:2px;background:#c6cbcc;"></div>
<div class="a" style="left:1193px;top:643px;width:799px;height:31px;background:#ffffff;"></div>
<div class="a" style="left:1195px;top:646px;width:16px;height:27px;background:#f4f5f5;border:1px solid #d7dbdd;border-right:2px solid #c9ced1;border-bottom:2px solid #c9ced1"></div>
<div class="t" style="left:1218px;top:650px;font-size:18.7px;color:#3a6ea5;">DGrp</div>
<svg class="a" style="left:1259px;top:654px;" width="16" height="9" viewBox="0 0 16 9"><path d="M0 8 L8 0 L16 8 Z" fill="#3a6ea5"/></svg>
<div class="t" style="left:1281px;top:650px;font-size:18.7px;color:#2a2a2a;">Bezeichnung</div>
<div class="t" style="left:1576px;top:650px;font-size:18.7px;color:#2a2a2a;">SB Dispo</div>
<div class="t" style="left:1697px;top:650px;font-size:18.7px;color:#2a2a2a;">SB Einkauf</div>
<div class="t" style="left:1818px;top:650px;font-size:18.7px;color:#2a2a2a;">SB Prod</div>
<div class="a" style="left:1211px;top:674px;width:781px;height:30px;background:#cdd9e2;"></div>
<div class="a" style="left:1195px;top:675px;width:16px;height:28px;background:#a9b1b7;"></div>
<svg class="a" style="left:1198px;top:682px;" width="9" height="14" viewBox="0 0 9 14"><path d="M1 1 L8 7 L1 13 Z" fill="#eef2f4"/></svg>
<div class="a" style="left:1211px;top:703px;width:781px;height:1.5px;background:#e3e7e9;"></div>
<div class="t" style="left:1281px;top:682px;font-size:18.7px;color:#222;">keine Disposition</div>
<div class="t" style="left:1576px;top:682px;font-size:18.7px;color:#222;">Geisler</div>
<div class="t" style="left:1697px;top:682px;font-size:18.7px;color:#222;">Eberl</div>
<div class="t" style="left:1818px;top:682px;font-size:18.7px;color:#222;">Heidt</div>
<div class="a" style="left:1195px;top:705px;width:16px;height:28px;background:#f5f6f6;border-left:1px solid #e1e4e6;border-right:2px solid #c9ced1;border-bottom:2px solid #c9ced1"></div>
<div class="a" style="left:1211px;top:734px;width:781px;height:1.5px;background:#e3e7e9;"></div>
<div class="t" style="left:1218px;top:712px;font-size:18.7px;color:#222;">100</div>
<div class="t" style="left:1281px;top:712px;font-size:18.7px;color:#222;">Kaufteile</div>
<div class="t" style="left:1576px;top:712px;font-size:18.7px;color:#222;">Bauer</div>
<div class="t" style="left:1697px;top:712px;font-size:18.7px;color:#222;">Bauer</div>
<div class="t" style="left:1818px;top:712px;font-size:18.7px;color:#222;">Bauer</div>
<div class="a" style="left:1195px;top:736px;width:16px;height:28px;background:#f5f6f6;border-left:1px solid #e1e4e6;border-right:2px solid #c9ced1;border-bottom:2px solid #c9ced1"></div>
<div class="a" style="left:1211px;top:764px;width:781px;height:1.5px;background:#e3e7e9;"></div>
<div class="t" style="left:1218px;top:743px;font-size:18.7px;color:#222;">110</div>
<div class="t" style="left:1281px;top:743px;font-size:18.7px;color:#222;">Handelsware</div>
<div class="t" style="left:1697px;top:743px;font-size:18.7px;color:#222;">Eberl</div>
<div class="a" style="left:1195px;top:766px;width:16px;height:28px;background:#f5f6f6;border-left:1px solid #e1e4e6;border-right:2px solid #c9ced1;border-bottom:2px solid #c9ced1"></div>
<div class="a" style="left:1211px;top:795px;width:781px;height:1.5px;background:#e3e7e9;"></div>
<div class="t" style="left:1218px;top:773px;font-size:18.7px;color:#222;">120</div>
<div class="t" style="left:1281px;top:773px;font-size:18.7px;color:#222;">Fertigungsmaterial (RHB)</div>
<div class="t" style="left:1576px;top:773px;font-size:18.7px;color:#222;">Geisler</div>
<div class="t" style="left:1697px;top:773px;font-size:18.7px;color:#222;">Eberl</div>
<div class="a" style="left:1195px;top:797px;width:16px;height:28px;background:#f5f6f6;border-left:1px solid #e1e4e6;border-right:2px solid #c9ced1;border-bottom:2px solid #c9ced1"></div>
<div class="a" style="left:1211px;top:825px;width:781px;height:1.5px;background:#e3e7e9;"></div>
<div class="t" style="left:1218px;top:804px;font-size:18.7px;color:#222;">130</div>
<div class="t" style="left:1281px;top:804px;font-size:18.7px;color:#222;">Kaufteile diverse</div>
<div class="t" style="left:1576px;top:804px;font-size:18.7px;color:#222;">Zander</div>
<div class="t" style="left:1697px;top:804px;font-size:18.7px;color:#222;">Zander</div>
<div class="t" style="left:1818px;top:804px;font-size:18.7px;color:#222;">Zander</div>
<div class="a" style="left:1195px;top:827px;width:16px;height:28px;background:#f5f6f6;border-left:1px solid #e1e4e6;border-right:2px solid #c9ced1;border-bottom:2px solid #c9ced1"></div>
<div class="a" style="left:1211px;top:855px;width:781px;height:1.5px;background:#e3e7e9;"></div>
<div class="t" style="left:1218px;top:834px;font-size:18.7px;color:#222;">200</div>
<div class="t" style="left:1281px;top:834px;font-size:18.7px;color:#222;">Eigenfertigung</div>
<div class="t" style="left:1576px;top:834px;font-size:18.7px;color:#222;">Zander</div>
<div class="t" style="left:1697px;top:834px;font-size:18.7px;color:#222;">Zander</div>
<div class="t" style="left:1818px;top:834px;font-size:18.7px;color:#222;">Zander</div>
<div class="a" style="left:1195px;top:857px;width:16px;height:28px;background:#f5f6f6;border-left:1px solid #e1e4e6;border-right:2px solid #c9ced1;border-bottom:2px solid #c9ced1"></div>
<div class="a" style="left:1211px;top:886px;width:781px;height:1.5px;background:#e3e7e9;"></div>
<div class="t" style="left:1218px;top:864px;font-size:18.7px;color:#222;">210</div>
<div class="t" style="left:1281px;top:864px;font-size:18.7px;color:#222;">CEE-Fertigung</div>
<div class="t" style="left:1576px;top:864px;font-size:18.7px;color:#222;">Geisler</div>
<div class="t" style="left:1697px;top:864px;font-size:18.7px;color:#222;">Eberl</div>
<div class="t" style="left:1818px;top:864px;font-size:18.7px;color:#222;">Heidt</div>
<div class="a" style="left:1195px;top:888px;width:16px;height:28px;background:#f5f6f6;border-left:1px solid #e1e4e6;border-right:2px solid #c9ced1;border-bottom:2px solid #c9ced1"></div>
<div class="a" style="left:1211px;top:916px;width:781px;height:1.5px;background:#e3e7e9;"></div>
<div class="t" style="left:1218px;top:895px;font-size:18.7px;color:#222;">220</div>
<div class="t" style="left:1281px;top:895px;font-size:18.7px;color:#222;">Briefkasten-Fertigung</div>
<div class="t" style="left:1576px;top:895px;font-size:18.7px;color:#222;">Geisler</div>
<div class="t" style="left:1697px;top:895px;font-size:18.7px;color:#222;">Eberl</div>
<div class="t" style="left:1818px;top:895px;font-size:18.7px;color:#222;">Heidt</div>
<div class="a" style="left:1195px;top:918px;width:16px;height:28px;background:#f5f6f6;border-left:1px solid #e1e4e6;border-right:2px solid #c9ced1;border-bottom:2px solid #c9ced1"></div>
<div class="a" style="left:1211px;top:947px;width:781px;height:1.5px;background:#e3e7e9;"></div>
<div class="t" style="left:1218px;top:925px;font-size:18.7px;color:#222;">230</div>
<div class="t" style="left:1281px;top:925px;font-size:18.7px;color:#222;">Schuko-Fertigung</div>
<div class="t" style="left:1576px;top:925px;font-size:18.7px;color:#222;">Geisler</div>
<div class="t" style="left:1697px;top:925px;font-size:18.7px;color:#222;">Eberl</div>
<div class="t" style="left:1818px;top:925px;font-size:18.7px;color:#222;">Heidt</div>
<div class="a" style="left:1195px;top:949px;width:16px;height:28px;background:#f5f6f6;border-left:1px solid #e1e4e6;border-right:2px solid #c9ced1;border-bottom:2px solid #c9ced1"></div>
<div class="a" style="left:1211px;top:977px;width:781px;height:1.5px;background:#e3e7e9;"></div>
<div class="t" style="left:1218px;top:956px;font-size:18.7px;color:#222;">240</div>
<div class="t" style="left:1281px;top:956px;font-size:18.7px;color:#222;">Schweißzange</div>
<div class="t" style="left:1576px;top:956px;font-size:18.7px;color:#222;">Zander</div>
<div class="t" style="left:1697px;top:956px;font-size:18.7px;color:#222;">Zander</div>
<div class="t" style="left:1818px;top:956px;font-size:18.7px;color:#222;">Zander</div>
<div class="a" style="left:1195px;top:979px;width:16px;height:28px;background:#f5f6f6;border-left:1px solid #e1e4e6;border-right:2px solid #c9ced1;border-bottom:2px solid #c9ced1"></div>
<div class="a" style="left:1211px;top:1007px;width:781px;height:1.5px;background:#e3e7e9;"></div>
<div class="t" style="left:1218px;top:986px;font-size:18.7px;color:#222;">300</div>
<div class="t" style="left:1281px;top:986px;font-size:18.7px;color:#222;">Fremdleistungen</div>
<div class="t" style="left:1576px;top:986px;font-size:18.7px;color:#222;">Zander</div>
<div class="t" style="left:1697px;top:986px;font-size:18.7px;color:#222;">Zander</div>
<div class="t" style="left:1818px;top:986px;font-size:18.7px;color:#222;">Zander</div>
<div class="a" style="left:1195px;top:1009px;width:16px;height:13px;background:#f5f6f6;border-left:1px solid #e1e4e6;border-right:2px solid #c9ced1"></div>
<div class="a" style="left:1277px;top:643px;width:1.5px;height:379px;background:#e6e9eb;"></div>
<div class="a" style="left:1572px;top:643px;width:1.5px;height:379px;background:#e6e9eb;"></div>
<div class="a" style="left:1694px;top:643px;width:1.5px;height:379px;background:#e6e9eb;"></div>
<div class="a" style="left:1815px;top:643px;width:1.5px;height:379px;background:#e6e9eb;"></div>
<div class="a" style="left:1992px;top:643px;width:25px;height:379px;background:#f3f3f3;"></div>
<svg class="a" style="left:1998px;top:653px;" width="12" height="10" viewBox="0 0 12 10"><path d="M1 9 L6 3 L11 9" fill="none" stroke="#555" stroke-width="2.2"/></svg>
<div class="a" style="left:1992px;top:670px;width:25px;height:35px;background:#cfd0d0;"></div>
<svg class="a" style="left:1998px;top:1004px;" width="12" height="10" viewBox="0 0 12 10"><path d="M1 1 L6 7 L11 1" fill="none" stroke="#555" stroke-width="2.2"/></svg>
<div class="a" style="left:1193px;top:1024px;width:825px;height:232px;background:#f6f7f5;"></div>
<div class="a" style="left:1193px;top:1256px;width:825px;height:8px;background:linear-gradient(#cfd3d3,#dfe9ee);"></div>
<div class="a" style="left:2018px;top:550px;width:6px;height:714px;background:#cfdae1;"></div>
<div class="t" style="left:1407px;top:1045px;font-size:19.3px;color:#5a5a5a;transform:translateX(-100%);">Dispositionsgruppe</div>
<div class="t" style="left:1419px;top:1045px;font-size:18.7px;color:#2a2a2a;">KonsiK</div>
<div class="a" style="left:1414px;top:1076px;width:345px;height:35px;background:#ffffff;border:2px solid #3d8bd2"></div>
<div class="t" style="left:1407px;top:1084px;font-size:18.7px;color:#5a5a5a;transform:translateX(-100%);">Bezeichnung</div>
<div class="t" style="left:1419px;top:1084px;font-size:18.7px;color:#222;">Konsignation LO K</div>
<div class="a" style="left:1577px;top:1082px;width:1.5px;height:24px;background:#111;"></div>
<svg class="a" style="left:1482px;top:1032px;" width="18" height="54" viewBox="0 0 18 54"><path d="M2 2 Q9 3 9 7 Q9 3 16 2" fill="none" stroke="#333" stroke-width="2" stroke-dasharray="2 1.5"/><path d="M9 6 V50" stroke="#333" stroke-width="2.2" stroke-dasharray="2.5 2"/></svg>
<div class="t" style="left:1407px;top:1143px;font-size:18.7px;color:#5a5a5a;transform:translateX(-100%);">SB Dispo</div>
<div class="a" style="left:1414px;top:1133px;width:153px;height:36px;background:#fefde1;border:1.5px solid #8d8f8f"></div>
<div class="t" style="left:1407px;top:1181px;font-size:18.7px;color:#5a5a5a;transform:translateX(-100%);">SB Einkauf</div>
<div class="a" style="left:1414px;top:1172px;width:153px;height:36px;background:#fefde1;border:1.5px solid #8d8f8f"></div>
<div class="t" style="left:1407px;top:1219px;font-size:18.7px;color:#5a5a5a;transform:translateX(-100%);">SB Produktion</div>
<div class="a" style="left:1414px;top:1210px;width:153px;height:36px;background:#fefde1;border:1.5px solid #8d8f8f"></div>
<div class="a" style="left:683px;top:1851px;width:486px;height:247px;background:linear-gradient(rgba(37,67,90,0.5) 0px,rgba(37,67,90,0.4) 5px,rgba(37,67,90,0.36));border-top-left-radius:21px"></div>
<div class="a" style="left:683px;top:2094px;width:486px;height:4px;background:linear-gradient(#a3afb8,#8f9aa2);"></div>
<div class="a" style="left:683px;top:2098px;width:486px;height:62px;background:#e3e8eb;"></div>
<div class="a" style="left:1169px;top:1851px;width:12px;height:309px;background:#e2e6ea;"></div>
<div class="a" style="left:1181px;top:1851px;width:2548px;height:309px;background:linear-gradient(rgba(37,67,90,0.5) 0px,rgba(37,67,90,0.41) 5px,rgba(37,67,90,0.32));border-top-right-radius:21px"></div>
<div class="a" style="left:0;top:0;width:3840px;height:2160px;transform:scaleY(-1);transform-origin:0 1835px;opacity:0.5">
<svg class="a" style="left:687px;top:1518px;" width="27" height="27" viewBox="0 0 27 27"><rect x="0" y="3" width="26" height="23" fill="#5d8db3"/><rect x="4" y="0" width="3" height="5" fill="#5d8db3"/><rect x="19" y="0" width="3" height="5" fill="#5d8db3"/><rect x="2.5" y="9.0" width="3.4" height="3.2" fill="#eef4f8"/><rect x="8.0" y="9.0" width="3.4" height="3.2" fill="#eef4f8"/><rect x="13.5" y="9.0" width="3.4" height="3.2" fill="#eef4f8"/><rect x="19.0" y="9.0" width="3.4" height="3.2" fill="#eef4f8"/><rect x="2.5" y="14.3" width="3.4" height="3.2" fill="#eef4f8"/><rect x="8.0" y="14.3" width="3.4" height="3.2" fill="#eef4f8"/><rect x="13.5" y="14.3" width="3.4" height="3.2" fill="#eef4f8"/><rect x="19.0" y="14.3" width="3.4" height="3.2" fill="#eef4f8"/><rect x="2.5" y="19.6" width="3.4" height="3.2" fill="#eef4f8"/><rect x="8.0" y="19.6" width="3.4" height="3.2" fill="#eef4f8"/><rect x="13.5" y="19.6" width="3.4" height="3.2" fill="#eef4f8"/><rect x="19.0" y="19.6" width="3.4" height="3.2" fill="#eef4f8"/></svg>
<div class="t" style="left:728px;top:1523px;font-size:19px;color:#555;">18.06.2025</div>
<svg class="a" style="left:1094px;top:1518px;" width="27" height="27" viewBox="0 0 27 27"><path d="M3 12 Q4 4 13 4 Q19 4 22 8 L25 5 V14 H16 L19 11 Q17 8.5 13 8.5 Q8 8.5 7.5 12 Z" fill="#5d8db3"/><path d="M24 15 Q23 23 14 23 Q8 23 5 19 L2 22 V13 H11 L8 16 Q10 18.5 14 18.5 Q19 18.5 19.5 15 Z" fill="#5d8db3"/></svg>
<svg class="a" style="left:1131px;top:1518px;" width="28" height="28" viewBox="0 0 28 28"><path d="M12.15,4.68 L14.00,1.00 L16.54,1.25 L17.64,5.22 L19.28,6.10 L23.19,4.81 L24.81,6.78 L22.78,10.36 L23.32,12.15 L27.00,14.00 L26.75,16.54 L22.78,17.64 L21.90,19.28 L23.19,23.19 L21.22,24.81 L17.64,22.78 L15.85,23.32 L14.00,27.00 L11.46,26.75 L10.36,22.78 L8.72,21.90 L4.81,23.19 L3.19,21.22 L5.22,17.64 L4.68,15.85 L1.00,14.00 L1.25,11.46 L5.22,10.36 L6.10,8.72 L4.81,4.81 L6.78,3.19 L10.36,5.22 Z M18.2,14 A4.2 4.2 0 1 0 9.8,14 A4.2 4.2 0 1 0 18.2,14 Z" fill="#5d8db3" fill-rule="evenodd"/></svg>
</div>
</body></html>
